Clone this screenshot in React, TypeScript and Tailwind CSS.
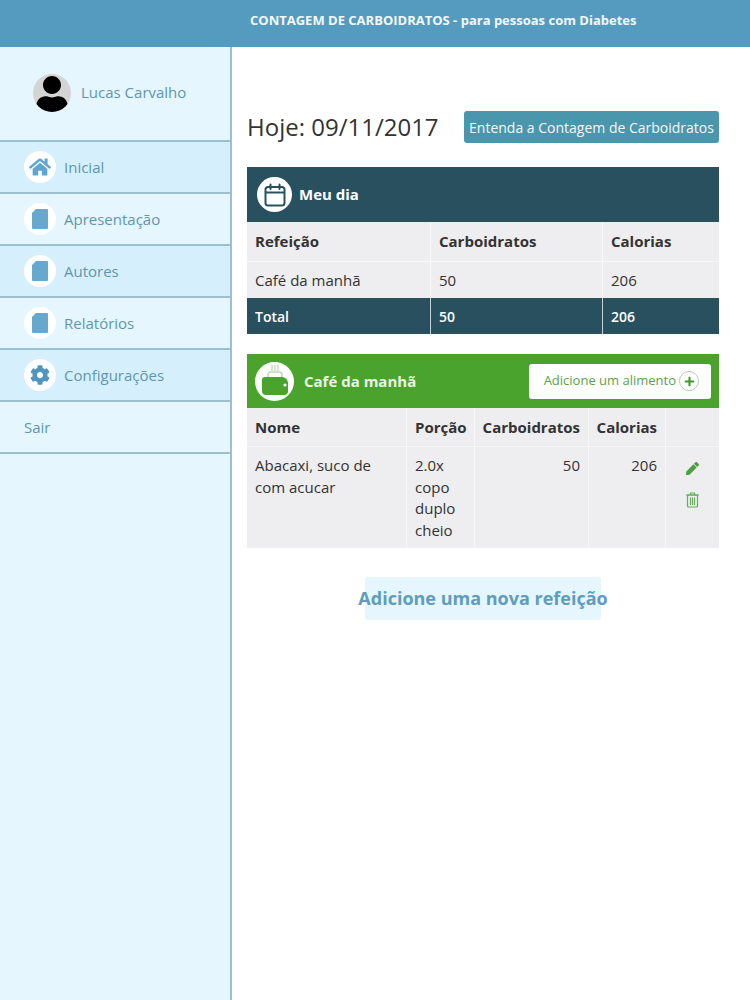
import { FaCog, FaHome, FaPen, FaPlus, FaUser } from "react-icons/fa";

const font = "font-['Open_Sans',sans-serif]";

function DocIcon() {
  return (
    <svg width="16" height="20" viewBox="0 0 16 20">
      <path d="M4 0H15a1 1 0 0 1 1 1V19a1 1 0 0 1-1 1H1a1 1 0 0 1-1-1V4Z" fill="#67a9cc" />
    </svg>
  );
}

function CalendarIcon() {
  return (
    <svg width="22" height="24" viewBox="0 0 22 24" fill="none" stroke="#28505f" strokeWidth="2">
      <rect x="1.5" y="4" width="19" height="18.5" rx="2.5" />
      <path d="M1.5 9.5H20.5" />
      <path d="M6.5 1.5V6M15.5 1.5V6" strokeLinecap="round" />
    </svg>
  );
}

function ToasterIcon() {
  return (
    <svg width="30" height="36" viewBox="0 0 30 36">
      <path d="M12 2v6M15 2v6M18 2v6" stroke="#a9cf9a" strokeWidth="1" />
      <path d="M8 15V11a2 2 0 0 1 2-2h10a2 2 0 0 1 2 2v4" fill="none" stroke="#9cc78a" strokeWidth="1" />
      <path d="M5 14H22a6 6 0 0 1 6 6v8a4 4 0 0 1-4 4H6a4 4 0 0 1-4-4V17a3 3 0 0 1 3-3Z" fill="#4aa32c" />
      <circle cx="25" cy="22" r="1.6" fill="#ffffff" />
    </svg>
  );
}

function TrashIcon() {
  return (
    <svg width="13" height="16" viewBox="0 0 13 16" fill="none" stroke="#66b05c" strokeWidth="1.2">
      <path d="M0 3H13" />
      <path d="M4.5 3V1h4v2" />
      <rect x="1.5" y="3" width="10" height="12" rx="1" />
      <path d="M4.5 5.5V13M6.5 5.5V13M8.5 5.5V13" />
    </svg>
  );
}

const menu = [
  { label: "Inicial", icon: <FaHome size={22} color="#5ea5cf" />, dark: true },
  { label: "Apresentação", icon: <DocIcon />, dark: false },
  { label: "Autores", icon: <DocIcon />, dark: true },
  { label: "Relatórios", icon: <DocIcon />, dark: false },
  { label: "Configurações", icon: <FaCog size={20} color="#4f95bd" />, dark: true },
];

function Sidebar() {
  return (
    <aside className="w-[232px] shrink-0 border-r-2 border-[#9dbfce] bg-[#e5f6fe]">
      <div className="flex h-[95px] items-center gap-[10px] border-b-2 border-[#9dbfce] pb-[2px] pl-[33px]">
        <div className="flex h-[38px] w-[38px] items-end justify-center overflow-hidden rounded-full bg-[#d4d4d4]">
          <FaUser size={36} color="#000000" />
        </div>
        <span className="text-[15px] text-[#5f96ae]">Lucas Carvalho</span>
      </div>
      {menu.map((item) => (
        <div
          key={item.label}
          className={`flex h-[52px] items-center gap-[8px] border-b-2 border-[#9dbfce] pl-[24px] ${
            item.dark ? "bg-[#d5f0fc]" : "bg-[#e5f6fe]"
          }`}
        >
          <div className="flex h-[32px] w-[32px] items-center justify-center rounded-full bg-white">
            {item.icon}
          </div>
          <span className="text-[15px] text-[#5f96ae]">{item.label}</span>
        </div>
      ))}
      <div className="flex h-[52px] items-center border-b-2 border-[#9dbfce] pl-[24px]">
        <span className="text-[15px] text-[#5f96ae]">Sair</span>
      </div>
    </aside>
  );
}

function MeuDia() {
  const cols = "grid grid-cols-[184px_172px_116px]";
  return (
    <section className="mt-[24px] text-[#333333]">
      <div className="flex h-[55px] items-center gap-[7px] bg-[#28505f] pl-[10px]">
        <div className="flex h-[35px] w-[35px] items-center justify-center rounded-full bg-white">
          <CalendarIcon />
        </div>
        <span className="text-[15px] font-bold text-white">Meu dia</span>
      </div>
      <div className={`${cols} h-[39px] items-center bg-[#eeedf0] text-[15px] font-bold`}>
        <div className="flex h-full items-center border-r border-[#f8f8f8] pl-[8px]">Refeição</div>
        <div className="flex h-full items-center border-r border-[#f8f8f8] pl-[8px]">Carboidratos</div>
        <div className="pl-[8px]">Calorias</div>
      </div>
      <div className={`${cols} h-[37px] items-center border-t border-[#f8f8f8] bg-[#eeedf0] text-[15px]`}>
        <div className="flex h-full items-center border-r border-[#f8f8f8] pl-[8px]">Café da manhã</div>
        <div className="flex h-full items-center border-r border-[#f8f8f8] pl-[8px]">50</div>
        <div className="pl-[8px]">206</div>
      </div>
      <div className={`${cols} h-[36px] items-center bg-[#28505f] text-[14px] font-semibold text-white`}>
        <div className="flex h-full items-center border-r border-[#c4d3d9] pl-[8px]">Total</div>
        <div className="flex h-full items-center border-r border-[#c4d3d9] pl-[8px]">50</div>
        <div className="pl-[8px]">206</div>
      </div>
    </section>
  );
}

function CafeDaManha() {
  const cols = "grid grid-cols-[160px_68px_114px_77px_53px]";
  return (
    <section className="mt-[20px] text-[#333333]">
      <div className="flex h-[54px] items-center bg-[#4aa32c] pl-[8px] pr-[8px]">
        <div className="flex h-[39px] w-[39px] items-center justify-center rounded-full bg-white">
          <ToasterIcon />
        </div>
        <span className="ml-[10px] text-[15px] font-bold text-[#e9f5e5]">Café da manhã</span>
        <button className="ml-auto flex h-[35px] w-[182px] items-center justify-end gap-[3px] rounded-[3px] bg-white pr-[12px] text-[13px] text-[#58a34a]">
          Adicione um alimento
          <span className="flex h-[20px] w-[20px] items-center justify-center rounded-full border border-[#b9c9b5]">
            <FaPlus size={11} color="#3f9a2b" />
          </span>
        </button>
      </div>
      <div className={`${cols} h-[38px] items-center bg-[#eeedf0] text-[15px] font-bold`}>
        <div className="flex h-full items-center border-r border-[#f6f6f7] pl-[8px]">Nome</div>
        <div className="flex h-full items-center border-r border-[#f6f6f7] pl-[8px]">Porção</div>
        <div className="flex h-full items-center justify-end border-r border-[#f6f6f7] pr-[8px]">Carboidratos</div>
        <div className="flex h-full items-center justify-end border-r border-[#f6f6f7] pr-[8px]">Calorias</div>
        <div />
      </div>
      <div className={`${cols} h-[102px] border-t border-[#f6f6f7] bg-[#eeedf0] text-[15px] leading-[21.5px]`}>
        <div className="border-r border-[#f6f6f7] pl-[8px] pr-[8px] pt-[8px]">Abacaxi, suco de com acucar</div>
        <div className="border-r border-[#f6f6f7] pl-[8px] pt-[8px]">2.0x copo duplo cheio</div>
        <div className="border-r border-[#f6f6f7] pr-[8px] pt-[8px] text-right">50</div>
        <div className="border-r border-[#f6f6f7] pr-[8px] pt-[8px] text-right">206</div>
        <div className="flex flex-col items-center gap-[17px] pr-[0px] pt-[15px]">
          <FaPen size={13} color="#4c9f3c" />
          <TrashIcon />
        </div>
      </div>
    </section>
  );
}

export default function App() {
  return (
    <div className={`flex min-h-[1000px] flex-col bg-white ${font}`}>
      <header className="flex h-[47px] shrink-0 items-center bg-[#559bbf] pb-[5px] pl-[250px] text-[13px] font-bold text-[#f2f8fb]">
        CONTAGEM DE CARBOIDRATOS - para pessoas com Diabetes
      </header>
      <div className="flex flex-1">
        <Sidebar />
        <main className="flex-1 pl-[15px] pr-[31px] pt-[64px]">
          <div className="flex h-[32px] items-center justify-between">
            <h1 className="text-[24px] font-normal text-[#333333]">Hoje: 09/11/2017</h1>
            <button className="flex h-[32px] w-[255px] items-center justify-center rounded-[3px] bg-[#4a97ad] text-[14px] text-[#f2f8fa]">
              Entenda a Contagem de Carboidratos
            </button>
          </div>
          <MeuDia />
          <CafeDaManha />
          <div className="mt-[29px] flex justify-center">
            <button className="flex h-[43px] w-[236px] items-center justify-center rounded-[3px] bg-[#e6f6fe] text-[18px] font-bold whitespace-nowrap text-[#5f9cbd]">
              Adicione uma nova refeição
            </button>
          </div>
        </main>
      </div>
    </div>
  );
}
